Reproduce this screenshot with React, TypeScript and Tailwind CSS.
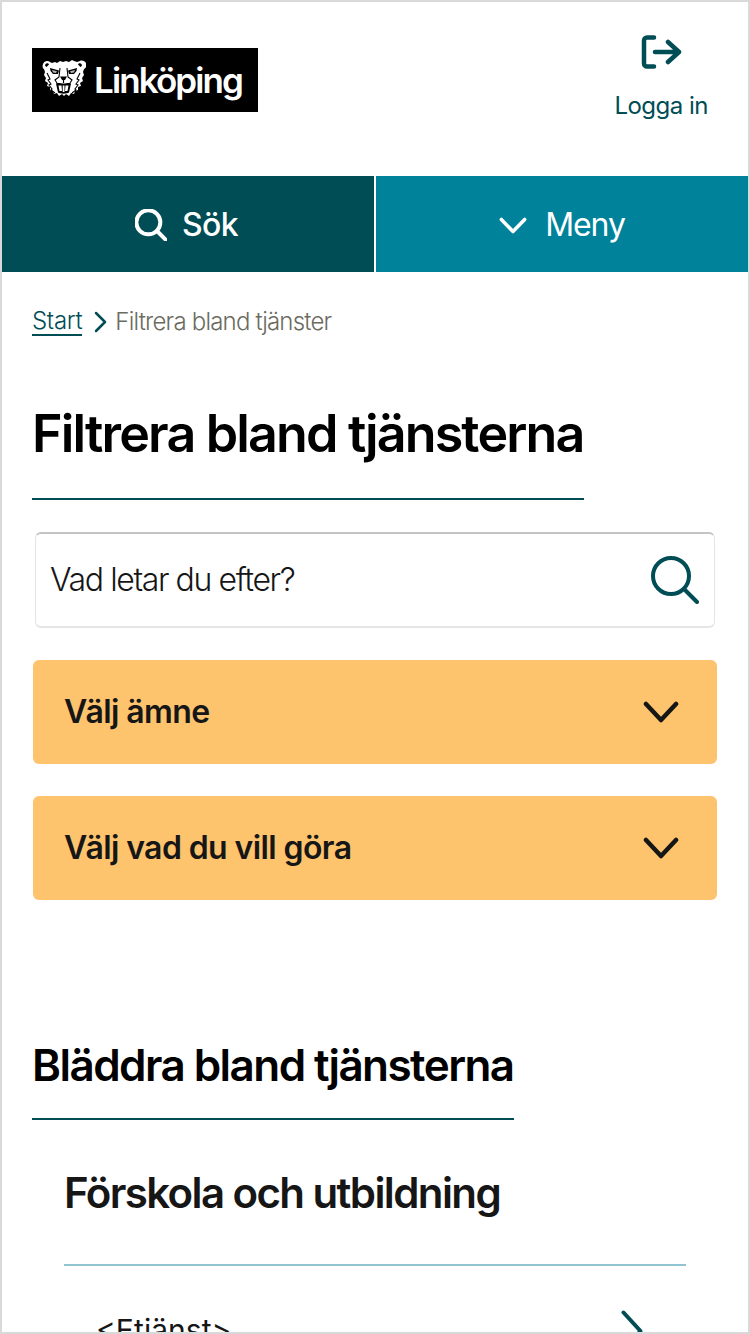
const Lion = () => (
  <svg viewBox="0 0 44 44" className="mt-[2px] h-[44px] w-[44px]" fill="none">
    {/* head and mane */}
    <path
      d="M1 5c1-3 5-4 7-2l2 1 3-1 2 1 3-2 3 1 3-1 3 1 3-2 2 1 3 1 3-1c2-1 5 0 6 2 1 3 0 5-2 6l-1 3 1 3-2 3 1 3-3 2 1 3-3 1 0 3-3 1-1 3-3-1-2 3-3-2-2 2-2-2-3 2-2-3-3 1-1-3-3-1 0-3-3-1 1-3-3-2 1-3-2-3 1-3-1-3C1 10 0 8 1 5Z"
      fill="#fff"
    />
    {/* ears */}
    <path d="M3.500 5c1-1 3-1 3.500 .5L4.500 8 3 6.500Z M39.500 5c-1-1-3-1-3.500 .5L38.500 8 40 6.500Z" fill="#000" />
    {/* brow and eyes */}
    <path d="M8 9l9 2.500-1 3.500-5 0-2.500-3Z M35 9l-9 2.500 1 3.500 5 0 2.500-3Z" fill="#000" />
    <path d="M10 11l5 1.300-1 1.700-3-.5Z M33 11l-5 1.300 1 1.700 3-.5Z" fill="#b5b5b5" />
    {/* nose and muzzle */}
    <path d="M18 9l-1 9-4 3 2 3 M25 9l1 9 4 3-2 3" stroke="#000" strokeWidth="1.100" />
    <path d="M18 17.500h7l-2 3.500h-3Z" fill="#000" />
    <path d="M21.500 21v3" stroke="#000" strokeWidth="1.200" />
    {/* mouth and teeth */}
    <path d="M14 24.500c3-1 4.500 0 7.500 0s4.500-1 7.500 0l-2 9c-2 1.500-9 1.500-11 0Z" fill="#000" />
    <path d="M16.500 26.500h3l.5 5.500h-2.500Z M20.700 26.500h1.800v6.500h-1.800Z M23.500 26.500h3l-1 5.500h-2.500Z" fill="#fff" />
    {/* mane lines */}
    <path
      d="M5 14l3 6-2 1 3 4-2 1 3 4-1 1 4 3 M38 14l-3 6 2 1-3 4 2 1-3 4 1 1-4 3 M12 36l4 2 2 2 3.500-1 3.500 1 2-2 4-2"
      stroke="#000"
      strokeWidth="1.100"
    />
  </svg>
);

const SearchIcon = ({ className, strokeWidth }: { className: string; strokeWidth: number }) => (
  <svg viewBox="0 0 48 48" className={className} fill="none" stroke="currentColor" strokeWidth={strokeWidth} strokeLinecap="round">
    <circle cx="20" cy="20" r="18" />
    <path d="M33 33l13 13" />
  </svg>
);

const FilterButton = ({ label }: { label: string }) => (
  <button className="flex h-[104px] w-full items-center justify-between rounded-md bg-[#fec36d] pl-[31px] pr-[38px] text-[32px] font-semibold tracking-[-0.6px] text-[#161616]">
    <span>{label}</span>
    <svg viewBox="0 0 36 22" className="h-[22px] w-[36px]" fill="none" stroke="currentColor" strokeWidth="4.500" strokeLinecap="round" strokeLinejoin="round">
      <path d="M3 3l15 16L33 3" />
    </svg>
  </button>
);

export default function App() {
  return (
    <div
      className="h-[1334px] w-[750px] overflow-hidden border-2 border-[#d9d9d9] bg-white text-[#161616]"
      style={{ fontFamily: "Inter, 'Noto Sans', sans-serif" }}
    >
      {/* Header */}
      <header className="flex h-[174px] items-start justify-between pl-[30px] pr-[40px]">
        <a className="mt-[46px] flex h-[64px] w-[226px] items-center bg-black pl-[10px] text-white">
          <Lion />
          <span className="ml-[8px] text-[35px] font-semibold tracking-[-1.9px]">Linköping</span>
        </a>
        <a className="mt-[31px] flex flex-col items-center text-[#004d55]">
          <svg viewBox="0 0 42 38" className="h-[38px] w-[42px]" fill="none" stroke="currentColor" strokeWidth="4.500" strokeLinecap="round" strokeLinejoin="round">
            <path d="M14 4.500H7a3 3 0 0 0-3 3v23a3 3 0 0 0 3 3h7" />
            <path d="M15 19h24M28 9l11 10-11 10" />
          </svg>
          <span className="mt-[19px] text-[24px] leading-[32px] tracking-[-0.5px]">Logga in</span>
        </a>
      </header>

      {/* Nav buttons */}
      <nav className="grid h-[96px] grid-cols-2 gap-[2px] text-[32px] text-white">
        <button className="flex items-center justify-center gap-[15px] bg-[#004d55] pr-[3px] pt-[2px] font-medium tracking-[-0.7px]">
          <SearchIcon className="h-[32px] w-[32px]" strokeWidth={6} />
          <span>Sök</span>
        </button>
        <button className="flex items-center justify-center gap-[18px] bg-[#00829b] pt-[2px] tracking-[-1.1px]">
          <svg viewBox="0 0 30 18" className="h-[17px] w-[28px]" fill="none" stroke="currentColor" strokeWidth="3.800" strokeLinecap="round" strokeLinejoin="round">
            <path d="M2.500 2.500L15 15.500 27.500 2.500" />
          </svg>
          <span>Meny</span>
        </button>
      </nav>

      <main className="pl-[30px] pr-[31px]">
        {/* Breadcrumb */}
        <div className="mt-[33px] flex items-center text-[24px] font-light leading-[33px] tracking-[-0.8px]">
          <a className="border-b-2 border-[#004d55] leading-[27px] tracking-[-0.3px] text-[#004d55]">Start</a>
          <svg viewBox="0 0 13 22" className="ml-[12px] mr-[8px] h-[22px] w-[13px] text-[#004d55]" fill="none" stroke="currentColor" strokeWidth="2.500" strokeLinecap="round" strokeLinejoin="round">
            <path d="M2 2l9 9-9 9" />
          </svg>
          <span className="text-[#6b6b5f]">Filtrera bland tjänster</span>
        </div>

        {/* Filter section */}
        <h1 className="mt-[67px] w-[552px] whitespace-nowrap border-b-2 border-[#004d55] pb-[35px] text-[52px] font-semibold leading-[58px] tracking-[-1.84px] text-black">
          Filtrera bland tjänsterna
        </h1>

        <div className="mt-[32px] ml-[3px] mr-[2px] flex h-[96px] items-center justify-between rounded-md border border-[#e5e5e5] border-t-2 border-t-[#c4c4c4] border-b-2 pl-[14px] pr-[15px]">
          <span className="text-[32px] font-light tracking-[-1.4px]">Vad letar du efter?</span>
          <SearchIcon className="h-[48px] w-[48px] text-[#004d55]" strokeWidth={4} />
        </div>

        <div className="mt-[32px] ml-[1px] flex flex-col gap-[32px]">
          <FilterButton label="Välj ämne" />
          <FilterButton label="Välj vad du vill göra" />
        </div>

        {/* Browse section */}
        <h2 className="mt-[140px] w-[482px] whitespace-nowrap border-b-2 border-[#004d55] pb-[28px] text-[44px] font-semibold leading-[50px] tracking-[-1.55px] text-black">
          Bläddra bland tjänsterna
        </h2>

        <section className="ml-[32px] mr-[31px]">
          <h3 className="mt-[49px] border-b-2 border-[#8fc5d0] pb-[47px] text-[42px] font-semibold leading-[48px] tracking-[-1.6px]">
            Förskola och utbildning
          </h3>
          <div className="mt-[42px] flex items-center justify-between pl-[32px] pr-[43px] text-[30px]">
            <span>&lt;Etjänst&gt;</span>
            <svg viewBox="0 0 22 42" className="h-[42px] w-[22px] text-[#004d55]" fill="none" stroke="currentColor" strokeWidth="4" strokeLinecap="round" strokeLinejoin="round">
              <path d="M2.500 2.500L19.500 21 2.500 39.500" />
            </svg>
          </div>
        </section>
      </main>
    </div>
  );
}
